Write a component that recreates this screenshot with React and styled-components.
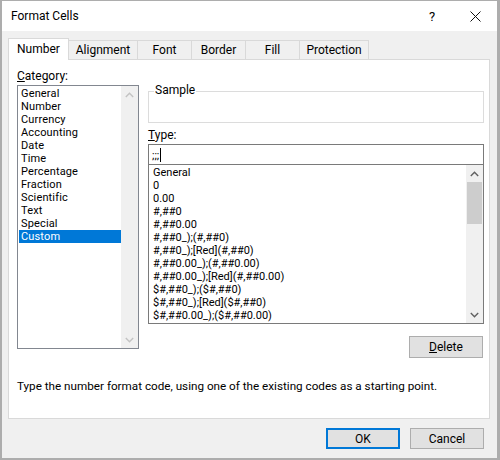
import React from "react";
import styled, { createGlobalStyle } from "styled-components";

const GlobalStyle = createGlobalStyle`
  html, body {
    margin: 0;
    padding: 0;
    background: #fff;
  }
  * {
    box-sizing: border-box;
  }
`;

const tabs = ["Number", "Alignment", "Font", "Border", "Fill", "Protection"];
const tabWidths = [61, 70, 55, 55, 55, 70];

const categories = [
  "General",
  "Number",
  "Currency",
  "Accounting",
  "Date",
  "Time",
  "Percentage",
  "Fraction",
  "Scientific",
  "Text",
  "Special",
  "Custom",
];

const formats = [
  "General",
  "0",
  "0.00",
  "#,##0",
  "#,##0.00",
  "#,##0_);(#,##0)",
  "#,##0_);[Red](#,##0)",
  "#,##0.00_);(#,##0.00)",
  "#,##0.00_);[Red](#,##0.00)",
  "$#,##0_);($#,##0)",
  "$#,##0_);[Red]($#,##0)",
  "$#,##0.00_);($#,##0.00)",
];

function App() {
  return (
    <>
      <GlobalStyle />
      <Window>
        <TitleBar>
          <Title>Format Cells</Title>
          <HelpBtn>?</HelpBtn>
          <CloseBtn>
            <svg width="11" height="11" viewBox="0 0 11 11">
              <path d="M0.5 0.5L10.5 10.5M10.5 0.5L0.5 10.5" stroke="#111" strokeWidth="1" fill="none" />
            </svg>
          </CloseBtn>
        </TitleBar>
        <Body>
          <TabRow>
            {tabs.map((t, i) => (
              <Tab key={t} $active={i === 0} $w={tabWidths[i]}>
                {t}
              </Tab>
            ))}
          </TabRow>
          <Panel>
            <Columns>
              <LeftCol>
                <Label>
                  <u>C</u>ategory:
                </Label>
                <ListBox $h={264}>
                  <Items>
                    {categories.map((c) => (
                      <Item key={c} $selected={c === "Custom"}>
                        {c}
                      </Item>
                    ))}
                  </Items>
                  <ScrollBar>
                    <Arrow $dim>
                      <Chevron up />
                    </Arrow>
                    <Track />
                    <Arrow $dim>
                      <Chevron />
                    </Arrow>
                  </ScrollBar>
                </ListBox>
              </LeftCol>
              <RightCol>
                <SampleGroup>
                  <Legend>Sample</Legend>
                </SampleGroup>
                <TypeLabel>
                  <u>T</u>ype:
                </TypeLabel>
                <TypeInput>
                  ;;;<Caret />
                </TypeInput>
                <ListBox $h={160} $flat>
                  <Items>
                    {formats.map((f) => (
                      <FormatItem key={f}>{f}</FormatItem>
                    ))}
                  </Items>
                  <ScrollBar>
                    <Arrow>
                      <Chevron up />
                    </Arrow>
                    <Track>
                      <Thumb />
                    </Track>
                    <Arrow>
                      <Chevron />
                    </Arrow>
                  </ScrollBar>
                </ListBox>
                <DeleteRow>
                  <Button $w={74} $h={22}>
                    <u>D</u>elete
                  </Button>
                </DeleteRow>
              </RightCol>
            </Columns>
            <Hint>
              Type the number format code, using one of the existing codes as a
              starting point.
            </Hint>
          </Panel>
          <Footer>
            <Button $w={74} $h={21} $default>
              OK
            </Button>
            <Button $w={74} $h={21}>
              Cancel
            </Button>
          </Footer>
        </Body>
      </Window>
    </>
  );
}
export default App;

const Chevron = ({ up }) => (
  <svg width="9" height="6" viewBox="0 0 9 6">
    <path
      d={up ? "M0.8 5L4.5 1.3L8.2 5" : "M0.8 1L4.5 4.7L8.2 1"}
      stroke="currentColor"
      strokeWidth="1.4"
      fill="none"
    />
  </svg>
);

const Window = styled.div`
  width: 500px;
  height: 460px;
  display: flex;
  flex-direction: column;
  background: #f0f0f0;
  border-style: solid;
  border-color: #adadad;
  border-width: 1px 3px 2px 2px;
  font-family: Roboto, "Noto Sans", sans-serif;
  font-size: 11.5px;
  color: #000;
`;

const TitleBar = styled.div`
  height: 30px;
  flex: 0 0 auto;
  display: flex;
  align-items: center;
  background: #fff;
  padding-left: 9px;
`;

const Title = styled.div`
  flex: 1;
  font-size: 12px;
`;

const HelpBtn = styled.div`
  width: 46px;
  margin-left: -4px;
  text-align: center;
  font-size: 13px;
`;

const CloseBtn = styled.div`
  width: 40px;
  height: 30px;
  display: flex;
  align-items: center;
  justify-content: center;
  margin-right: 2px;
`;

const Body = styled.div`
  flex: 1;
  display: flex;
  flex-direction: column;
  padding: 7px 7px 0 6px;
`;

const TabRow = styled.div`
  display: flex;
  align-items: flex-end;
  height: 21px;
`;

const Tab = styled.div`
  position: relative;
  width: ${(p) => p.$w}px;
  height: ${(p) => (p.$active ? 22 : 19)}px;
  margin-left: -1px;
  margin-bottom: ${(p) => (p.$active ? -1 : 0)}px;
  z-index: ${(p) => (p.$active ? 2 : 1)};
  display: flex;
  align-items: center;
  justify-content: center;
  padding-bottom: ${(p) => (p.$active ? 2 : 0)}px;
  font-size: 12px;
  background: ${(p) => (p.$active ? "#fff" : "#f0f0f0")};
  border: 1px solid #d9d9d9;
  border-bottom: none;

  &:first-child {
    margin-left: 0;
  }
`;

const Panel = styled.div`
  height: 360px;
  background: #fff;
  border: 1px solid #d9d9d9;
  padding: 9px 8px 0 8px;
  display: flex;
  flex-direction: column;
`;

const Columns = styled.div`
  display: grid;
  grid-template-columns: 122px 336px;
  column-gap: 9px;
`;

const LeftCol = styled.div`
  display: flex;
  flex-direction: column;
`;

const RightCol = styled.div`
  display: flex;
  flex-direction: column;
  padding-top: 22px;
`;

const Label = styled.div`
  line-height: 14px;
  height: 14px;
  margin-bottom: 2px;
  font-size: 12px;
`;

const ListBox = styled.div`
  height: ${(p) => p.$h}px;
  border: 1px solid ${(p) => (p.$flat ? "#7a7a7a" : "#828790")};
  display: flex;
  background: #fff;
`;

const Items = styled.div`
  flex: 1;
  padding: 1px 0 0 1px;
  overflow: hidden;
`;

const Item = styled.div`
  height: 13px;
  line-height: 13px;
  padding-left: 2px;
  white-space: nowrap;
  font-size: 11px;
  letter-spacing: 0.15px;
  background: ${(p) => (p.$selected ? "#0078d7" : "transparent")};
  color: ${(p) => (p.$selected ? "#fff" : "#000")};
`;

const FormatItem = styled(Item)`
  padding-left: 3px;
  letter-spacing: 0;
`;

const ScrollBar = styled.div`
  width: 17px;
  display: flex;
  flex-direction: column;
  background: #f0f0f0;
`;

const Arrow = styled.div`
  height: 17px;
  display: flex;
  align-items: center;
  justify-content: center;
  color: ${(p) => (p.$dim ? "#c3c3c3" : "#606060")};
`;

const Track = styled.div`
  flex: 1;
  padding: 0 1px;
`;

const Thumb = styled.div`
  height: 42px;
  background: #cdcdcd;
`;

const SampleGroup = styled.div`
  position: relative;
  height: 32px;
  border: 1px solid #dcdcdc;
`;

const Legend = styled.span`
  position: absolute;
  left: 5px;
  top: -9px;
  padding: 0 1px;
  background: #fff;
  line-height: 14px;
  font-size: 12px;
`;

const TypeLabel = styled.div`
  line-height: 14px;
  margin-top: 5px;
  margin-bottom: 2px;
  font-size: 12px;
`;

const TypeInput = styled.div`
  height: 20px;
  border: 1px solid #7a7a7a;
  border-bottom: none;
  display: flex;
  align-items: center;
  padding-left: 3px;
  line-height: 16px;
`;

const Caret = styled.span`
  display: inline-block;
  width: 1px;
  height: 14px;
  background: #000;
  margin-left: 1px;
`;

const DeleteRow = styled.div`
  display: flex;
  justify-content: flex-end;
  margin-top: 12px;
  padding-right: 1px;
`;

const Button = styled.div`
  width: ${(p) => p.$w}px;
  height: ${(p) => p.$h}px;
  display: flex;
  align-items: center;
  justify-content: center;
  font-size: 12px;
  background: #e1e1e1;
  border: ${(p) => (p.$default ? "2px solid #0078d7" : "1px solid #adadad")};
`;

const Hint = styled.div`
  margin-top: 21px;
  line-height: 14px;
  font-size: 11.7px;
`;

const Footer = styled.div`
  display: flex;
  justify-content: flex-end;
  gap: 10px;
  padding: 9px 6px 0 0;
`;
